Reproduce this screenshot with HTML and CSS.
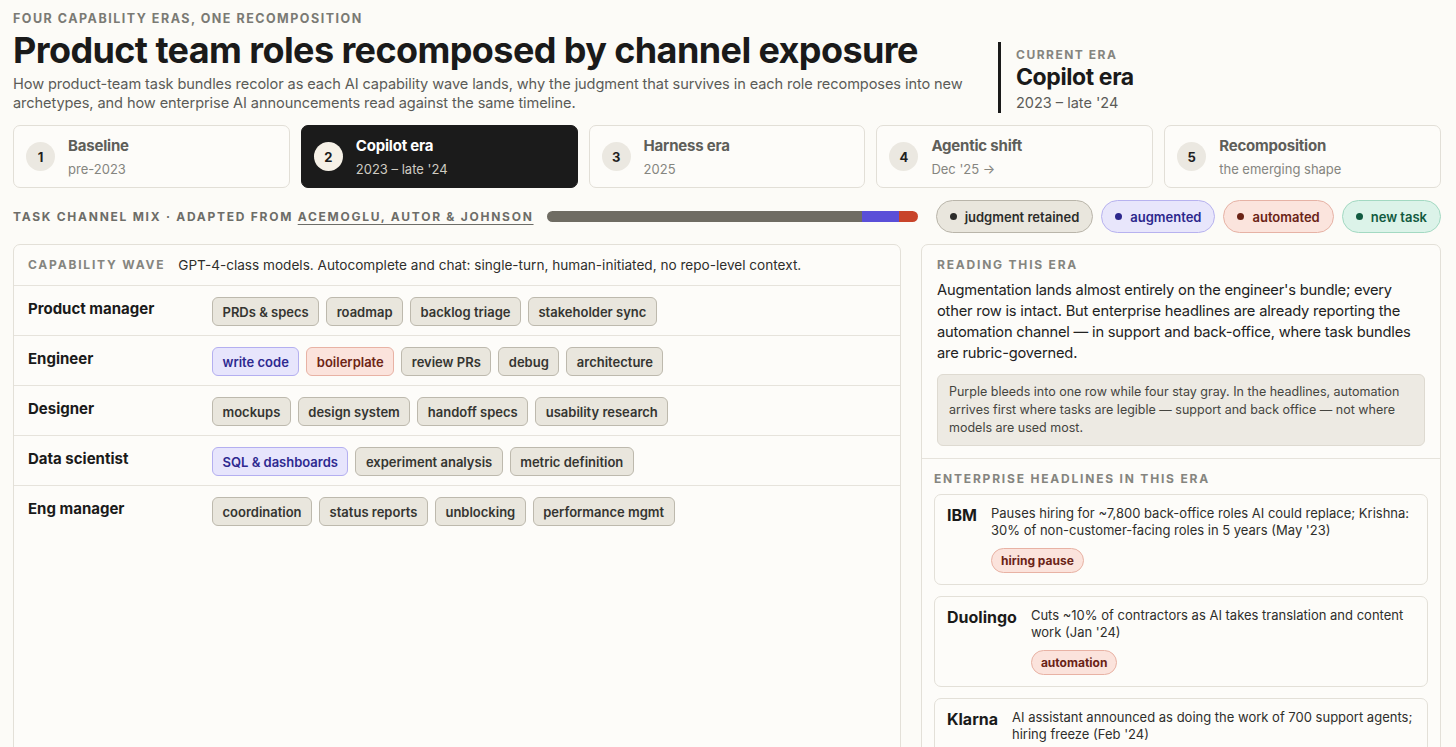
FILE: index.html
```html
<!DOCTYPE html>
<html lang="en">
<head>
  <meta charset="UTF-8">
  <meta name="viewport" content="width=device-width, initial-scale=1.0">
  <title>Product team roles recomposed</title>
  <link rel="stylesheet" href="styles.css">
</head>
<body>
  <div class="page">
    <header class="top">
      <div class="intro">
        <p class="eyebrow">Four capability eras, one recomposition</p>
        <h1>Product team roles recomposed by channel exposure</h1>
        <p class="lede">How product-team task bundles recolor as each AI capability wave lands, why the judgment that survives in each role recomposes into new archetypes, and how enterprise AI announcements read against the same timeline.</p>
      </div>
      <div class="current">
        <p class="current-label">Current era</p>
        <p class="current-name">Copilot era</p>
        <p class="current-date">2023 – late '24</p>
      </div>
    </header>

    <nav class="eras">
      <div class="era"><span class="num">1</span><div><p class="era-title">Baseline</p><p class="era-sub">pre-2023</p></div></div>
      <div class="era active"><span class="num">2</span><div><p class="era-title">Copilot era</p><p class="era-sub">2023 – late '24</p></div></div>
      <div class="era"><span class="num">3</span><div><p class="era-title">Harness era</p><p class="era-sub">2025</p></div></div>
      <div class="era"><span class="num">4</span><div><p class="era-title">Agentic shift</p><p class="era-sub">Dec '25 →</p></div></div>
      <div class="era"><span class="num">5</span><div><p class="era-title">Recomposition</p><p class="era-sub">the emerging shape</p></div></div>
    </nav>

    <div class="mix">
      <p class="mix-label">Task channel mix · adapted from <a href="#">Acemoglu, Autor &amp; Johnson</a></p>
      <div class="mix-bar">
        <span class="seg seg-judg" style="width: 85%"></span>
        <span class="seg seg-aug" style="width: 10%"></span>
        <span class="seg seg-auto" style="width: 5%"></span>
      </div>
      <ul class="legend">
        <li class="pill judg"><i></i>judgment retained</li>
        <li class="pill aug"><i></i>augmented</li>
        <li class="pill auto"><i></i>automated</li>
        <li class="pill new"><i></i>new task</li>
      </ul>
    </div>

    <main class="grid">
      <section class="panel roles">
        <div class="wave">
          <span class="label">Capability wave</span>
          <span class="wave-text">GPT-4-class models. Autocomplete and chat: single-turn, human-initiated, no repo-level context.</span>
        </div>
        <div class="role">
          <span class="role-name">Product manager</span>
          <div class="tags">
            <span class="tag">PRDs &amp; specs</span><span class="tag">roadmap</span><span class="tag">backlog triage</span><span class="tag">stakeholder sync</span>
          </div>
        </div>
        <div class="role">
          <span class="role-name">Engineer</span>
          <div class="tags">
            <span class="tag aug">write code</span><span class="tag auto">boilerplate</span><span class="tag">review PRs</span><span class="tag">debug</span><span class="tag">architecture</span>
          </div>
        </div>
        <div class="role">
          <span class="role-name">Designer</span>
          <div class="tags">
            <span class="tag">mockups</span><span class="tag">design system</span><span class="tag">handoff specs</span><span class="tag">usability research</span>
          </div>
        </div>
        <div class="role">
          <span class="role-name">Data scientist</span>
          <div class="tags">
            <span class="tag aug">SQL &amp; dashboards</span><span class="tag">experiment analysis</span><span class="tag">metric definition</span>
          </div>
        </div>
        <div class="role">
          <span class="role-name">Eng manager</span>
          <div class="tags">
            <span class="tag">coordination</span><span class="tag">status reports</span><span class="tag">unblocking</span><span class="tag">performance mgmt</span>
          </div>
        </div>
      </section>

      <aside class="panel side">
        <div class="reading">
          <p class="label">Reading this era</p>
          <p class="reading-text">Augmentation lands almost entirely on the engineer's bundle; every other row is intact. But enterprise headlines are already reporting the automation channel — in support and back-office, where task bundles are rubric-governed.</p>
          <p class="note">Purple bleeds into one row while four stay gray. In the headlines, automation arrives first where tasks are legible — support and back office — not where models are used most.</p>
        </div>
        <div class="headlines">
          <p class="label">Enterprise headlines in this era</p>
          <article class="news">
            <span class="company">IBM</span>
            <div>
              <p class="news-text">Pauses hiring for ~7,800 back-office roles AI could replace; Krishna: 30% of non-customer-facing roles in 5 years (May '23)</p>
              <span class="badge">hiring pause</span>
            </div>
          </article>
          <article class="news">
            <span class="company">Duolingo</span>
            <div>
              <p class="news-text">Cuts ~10% of contractors as AI takes translation and content work (Jan '24)</p>
              <span class="badge">automation</span>
            </div>
          </article>
          <article class="news">
            <span class="company">Klarna</span>
            <div>
              <p class="news-text">AI assistant announced as doing the work of 700 support agents; hiring freeze (Feb '24)</p>
              <span class="badge">automation</span>
            </div>
          </article>
        </div>
      </aside>
    </main>
  </div>
</body>
</html>
```

FILE: styles.css
```css
* {
  margin: 0;
  padding: 0;
  box-sizing: border-box;
  list-style: none;
}

body {
  background: #fcfbf7;
  color: #1a1a1a;
  font-family: Inter, "Noto Sans", sans-serif;
}

.page {
  padding: 11px 15px 0 13px;
}

/* header */
.top {
  display: flex;
  align-items: flex-start;
}
.intro {
  width: 972px;
}
.eyebrow {
  font-size: 12.5px;
  font-weight: 700;
  letter-spacing: 1.5px;
  text-transform: uppercase;
  color: #7a7a74;
  line-height: 16px;
}
h1 {
  font-size: 36px;
  font-weight: 700;
  letter-spacing: -0.6px;
  line-height: 44px;
  margin-top: 1px;
}
.lede {
  font-size: 14.6px;
  letter-spacing: -0.1px;
  line-height: 19px;
  color: #5b5b57;
  margin-top: 3px;
}
.current {
  margin: 31px 0 0 13px;
  border-left: 3px solid #1a1a1a;
  padding: 6px 0 0 15px;
  height: 71px;
}
.current-label {
  font-size: 12px;
  font-weight: 700;
  letter-spacing: 1.5px;
  text-transform: uppercase;
  color: #85857f;
  line-height: 14px;
}
.current-name {
  font-size: 23px;
  font-weight: 700;
  letter-spacing: -0.4px;
  line-height: 30px;
}
.current-date {
  font-size: 14.5px;
  color: #5b5b57;
  line-height: 20px;
  margin-top: 1px;
}

/* era stepper */
.eras {
  display: grid;
  grid-template-columns: repeat(5, 1fr);
  gap: 11px;
  margin-top: 12px;
}
.era {
  height: 63px;
  display: flex;
  align-items: center;
  gap: 13px;
  padding: 0 12px;
  border: 1px solid #e2dfd7;
  border-radius: 7px;
  background: #fdfcf9;
}
.num {
  width: 29px;
  height: 29px;
  border-radius: 50%;
  background: #ebe8e1;
  display: flex;
  align-items: center;
  justify-content: center;
  font-size: 13px;
  font-weight: 700;
  color: #1f1f1f;
  flex-shrink: 0;
}
.era-title {
  font-size: 15px;
  font-weight: 700;
  color: #5e5e59;
  line-height: 20px;
  letter-spacing: -0.2px;
}
.era-sub {
  font-size: 13px;
  color: #85857f;
  line-height: 18px;
  margin-top: 4px;
}
.era.active {
  background: #1b1b1b;
  border-color: #1b1b1b;
}
.era.active .num {
  background: #f6f1e7;
  color: #1b1b1b;
}
.era.active .era-title {
  color: #fff;
}
.era.active .era-sub {
  color: #cfcbc2;
}

/* channel mix */
.mix {
  display: flex;
  align-items: center;
  margin-top: 12px;
  height: 33px;
}
.mix-label {
  font-size: 12px;
  font-weight: 700;
  letter-spacing: 1.74px;
  text-transform: uppercase;
  color: #6d6d68;
  white-space: nowrap;
}
.mix-label a {
  color: #6d6d68;
  text-decoration: underline;
  text-underline-offset: 3px;
}
.mix-bar {
  display: flex;
  width: 371px;
  height: 11px;
  margin-left: 13px;
  border-radius: 6px;
  overflow: hidden;
}
.seg-judg { background: #6f6c63; }
.seg-aug { background: #5a4fd8; }
.seg-auto { background: #c8442a; }

.legend {
  display: flex;
  gap: 8px;
  margin-left: auto;
}
.pill {
  display: flex;
  align-items: center;
  gap: 8px;
  height: 33px;
  padding: 0 13px;
  border-radius: 17px;
  border: 1px solid;
  font-size: 13px;
  font-weight: 600;
}
.pill i {
  width: 7px;
  height: 7px;
  border-radius: 50%;
  background: currentColor;
}
.pill.judg { background: #e9e6dd; border-color: #b9b5aa; color: #2c2c2a; }
.pill.aug { background: #e8e6fb; border-color: #b7b2ef; color: #2c278c; }
.pill.auto { background: #fbe4dd; border-color: #e6b2a5; color: #6a2316; }
.pill.new { background: #dcf3e9; border-color: #a3d9c2; color: #115a40; }

/* panels */
.grid {
  display: grid;
  grid-template-columns: 1fr 520px;
  gap: 20px;
  margin-top: 11px;
}
.panel {
  border: 1px solid #e3e0d8;
  border-radius: 7px;
  background: #fdfcf9;
  min-height: 520px;
}
.label {
  font-size: 12px;
  font-weight: 700;
  letter-spacing: 1.8px;
  text-transform: uppercase;
  color: #85857f;
  line-height: 16px;
}

.wave {
  display: flex;
  align-items: center;
  gap: 13px;
  height: 41px;
  padding: 0 14px;
  border-bottom: 1px solid #e6e3dc;
}
.wave-text {
  font-size: 13.6px;
  color: #2e2e2b;
}
.role {
  display: flex;
  align-items: flex-start;
  padding: 11px 14px 9px;
  border-bottom: 1px solid #e6e3dc;
}
.role:last-child {
  border-bottom: 0;
}
.role-name {
  width: 184px;
  flex-shrink: 0;
  font-size: 15px;
  font-weight: 700;
  line-height: 24px;
}
.tags {
  display: flex;
  flex-wrap: wrap;
  gap: 7px;
}
.tag {
  height: 29px;
  display: flex;
  align-items: center;
  padding: 0 9.5px;
  border: 1px solid #bdb9ad;
  border-radius: 6px;
  background: #e9e6dd;
  font-size: 13px;
  font-weight: 600;
  color: #353531;
}
.tag.aug { background: #e7e5fc; border-color: #b4aff0; color: #2e2990; }
.tag.auto { background: #fbe3dc; border-color: #e8b2a4; color: #6d2415; }

/* right side */
.reading {
  padding: 12px 15px 12px;
  border-bottom: 1px solid #e6e3dc;
}
.reading-text {
  font-size: 14.7px;
  letter-spacing: -0.2px;
  line-height: 21px;
  color: #222;
  margin-top: 7px;
}
.note {
  margin-top: 10px;
  padding: 8px 11px;
  background: #edeae3;
  border: 1px solid #dedad1;
  border-radius: 6px;
  font-size: 12.5px;
  line-height: 18px;
  color: #45453f;
}
.headlines {
  padding: 12px 12px;
}
.headlines .label {
  margin-bottom: 7px;
}
.news {
  display: flex;
  gap: 14px;
  padding: 10px 12px 11px;
  border: 1px solid #e3e0d8;
  border-radius: 7px;
  background: #fdfcf9;
  margin-bottom: 11px;
}
.company {
  font-size: 16px;
  font-weight: 700;
  line-height: 20px;
  flex-shrink: 0;
}
.news-text {
  font-size: 13px;
  line-height: 17px;
  color: #2e2e2b;
}
.badge {
  display: inline-block;
  margin-top: 9px;
  padding: 0 9px;
  height: 25px;
  line-height: 23px;
  border-radius: 13px;
  background: #fbe3dc;
  border: 1px solid #e8b2a4;
  color: #6a2316;
  font-size: 12px;
  font-weight: 700;
}
```
